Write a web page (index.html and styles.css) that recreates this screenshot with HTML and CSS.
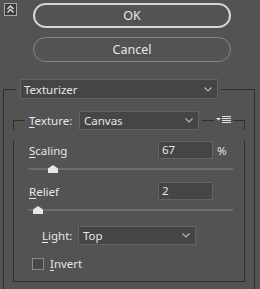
FILE: index.html
```html
<!DOCTYPE html>
<html lang="en">
<head>
    <meta charset="UTF-8">
    <title>Texturizer</title>
    <link rel="stylesheet" href="styles.css">
</head>
<body>
    <div class="top">
        <div class="collapse">
            <svg width="11" height="11" viewBox="0 0 11 11">
                <path d="M2.5 5 L5.5 2 L8.5 5 M2.5 8.5 L5.5 5.5 L8.5 8.5" fill="none" stroke="#e0e0e0" stroke-width="1.3"/>
            </svg>
        </div>
        <div class="buttons">
            <button class="btn btn-ok">OK</button>
            <button class="btn">Cancel</button>
        </div>
    </div>

    <div class="group outer">
        <div class="group-head">
            <span class="seg seg-left"></span>
            <div class="select sel-filter">
                <span>Texturizer</span>
                <svg class="chev" width="8" height="5" viewBox="0 0 8 5"><path d="M0.5 0.5 L4 4 L7.5 0.5" fill="none" stroke="#b5b5b5" stroke-width="1.2"/></svg>
            </div>
            <span class="seg seg-right"></span>
        </div>
        <div class="group-body outer-body">
            <div class="group inner">
                <div class="group-head inner-head">
                    <span class="seg seg-left small"></span>
                    <span class="head-label"><u>T</u>exture:</span>
                    <div class="select sel-texture">
                        <span>Canvas</span>
                        <svg class="chev" width="8" height="5" viewBox="0 0 8 5"><path d="M0.5 0.5 L4 4 L7.5 0.5" fill="none" stroke="#b5b5b5" stroke-width="1.2"/></svg>
                    </div>
                    <span class="seg seg-mid"></span>
                    <span class="menu-icon">
                        <svg width="16" height="8" viewBox="0 0 16 8">
                            <path d="M0 2 H5 L2.5 4.5 Z" fill="#e0e0e0"/>
                            <rect x="6" y="0" width="9" height="1" fill="#e0e0e0"/>
                            <rect x="6" y="2" width="9" height="1" fill="#e0e0e0"/>
                            <rect x="6" y="4" width="9" height="1" fill="#e0e0e0"/>
                            <rect x="6" y="6" width="9" height="1" fill="#e0e0e0"/>
                        </svg>
                    </span>
                    <span class="seg seg-right"></span>
                </div>
                <div class="group-body inner-body">
                    <div class="field-row first">
                        <span class="field-label"><u>S</u>caling</span>
                        <div class="num-input">67</div>
                        <span class="unit">%</span>
                    </div>
                    <div class="slider">
                        <span class="thumb" style="left: 20px"></span>
                    </div>
                    <div class="field-row second">
                        <span class="field-label"><u>R</u>elief</span>
                        <div class="num-input">2</div>
                    </div>
                    <div class="slider">
                        <span class="thumb" style="left: 5px"></span>
                    </div>
                    <div class="light-row">
                        <span class="light-label"><u>L</u>ight:</span>
                        <div class="select sel-light">
                            <span>Top</span>
                            <svg class="chev" width="8" height="5" viewBox="0 0 8 5"><path d="M0.5 0.5 L4 4 L7.5 0.5" fill="none" stroke="#b5b5b5" stroke-width="1.2"/></svg>
                        </div>
                    </div>
                    <div class="check-row">
                        <span class="checkbox"></span>
                        <span class="check-label"><u>I</u>nvert</span>
                    </div>
                </div>
            </div>
        </div>
    </div>
</body>
</html>
```

FILE: styles.css
```css
body {
    margin: 0;
    width: 260px;
    height: 289px;
    overflow: hidden;
    background: #535353;
    color: #e6e6e6;
    font-family: 'Noto Sans', 'Open Sans', sans-serif;
    font-size: 11.5px;
}
u {
    text-underline-offset: 2px;
}
.top {
    display: flex;
    align-items: flex-start;
    padding-top: 3px;
}
.collapse {
    width: 13px;
    height: 13px;
    box-sizing: border-box;
    margin-left: 4px;
    border: 1px solid #a8a8a8;
    background: #3d3d3d;
    display: flex;
}
.buttons {
    display: flex;
    flex-direction: column;
    gap: 9px;
    margin-left: 16px;
    width: 198px;
}
.btn {
    height: 25px;
    border-radius: 13px;
    border: 1px solid #858585;
    background: transparent;
    color: #e6e6e6;
    font-family: inherit;
    font-size: 12.5px;
    padding: 0;
}
.btn-ok {
    border: 2px solid #d6d6d6;
}

/* group boxes */
.group {
    box-sizing: border-box;
}
.outer {
    margin: 17px 0 0 3px;
    width: 252px;
}
.group-head {
    display: flex;
    height: 20px;
}
.seg {
    margin-top: 10px;
    border-top: 1px solid #2e2e2e;
}
.seg-left {
    width: 12px;
    border-left: 1px solid #2e2e2e;
    margin-right: 4px;
}
.seg-right {
    flex: 1;
    margin-left: 3px;
    border-right: 1px solid #2e2e2e;
}
.group-body {
    border-left: 1px solid #2e2e2e;
    border-right: 1px solid #2e2e2e;
}
.outer-body {
    box-sizing: border-box;
    padding: 12px 9px 0 9px;
    height: 190px;
}
.inner {
    width: 232px;
}
.inner-head {
    height: 19px;
}
.inner-head .seg {
    margin-top: 9px;
}
.seg-left.small {
    width: 11px;
}
.head-label {
    width: 50px;
    line-height: 19px;
}
.seg-mid {
    width: 12px;
    margin-left: 3px;
}
.menu-icon {
    display: flex;
    align-items: center;
    padding-left: 2px;
    margin-top: -1px;
}
.inner-head .seg-right {
    margin-left: 1px;
}
.inner-body {
    border-bottom: 1px solid #2e2e2e;
    padding-bottom: 11px;
}

/* selects */
.select {
    box-sizing: border-box;
    display: flex;
    align-items: center;
    justify-content: space-between;
    background: #454545;
    border: 1px solid #636363;
    padding: 0 5px 0 3px;
}
.sel-filter {
    width: 198px;
}
.sel-texture {
    width: 120px;
    padding-left: 4px;
}
.sel-light {
    width: 118px;
    height: 19px;
    padding-left: 4px;
}

/* fields */
.field-row {
    display: flex;
    align-items: center;
    height: 18px;
    padding-left: 15px;
}
.field-row.first {
    margin-top: 11px;
}
.field-row.second {
    margin-top: 8px;
}
.field-label {
    width: 129px;
}
.num-input {
    box-sizing: border-box;
    width: 55px;
    height: 18px;
    line-height: 16px;
    background: #454545;
    border: 1px solid #636363;
    padding-left: 3px;
}
.unit {
    margin-left: 4px;
}
.slider {
    position: relative;
    width: 205px;
    height: 10px;
    margin: 5px 0 0 14px;
}
.slider::before {
    content: '';
    position: absolute;
    left: 0;
    right: 0;
    top: 4px;
    height: 2px;
    background: #6c6c6c;
}
.thumb {
    position: absolute;
    top: 1px;
    width: 10px;
    height: 8px;
    background: #e6e6e6;
    clip-path: polygon(50% 0, 100% 45%, 100% 100%, 0 100%, 0 45%);
}
.light-row {
    display: flex;
    align-items: center;
    height: 19px;
    margin-top: 11px;
    padding-left: 28px;
}
.light-label {
    width: 36px;
}
.check-row {
    display: flex;
    align-items: center;
    height: 12px;
    margin-top: 13px;
    padding-left: 18px;
}
.checkbox {
    box-sizing: border-box;
    width: 12px;
    height: 12px;
    border: 1px solid #8a8a8a;
    background: #474747;
}
.check-label {
    margin-left: 6px;
    line-height: 12px;
}
```
